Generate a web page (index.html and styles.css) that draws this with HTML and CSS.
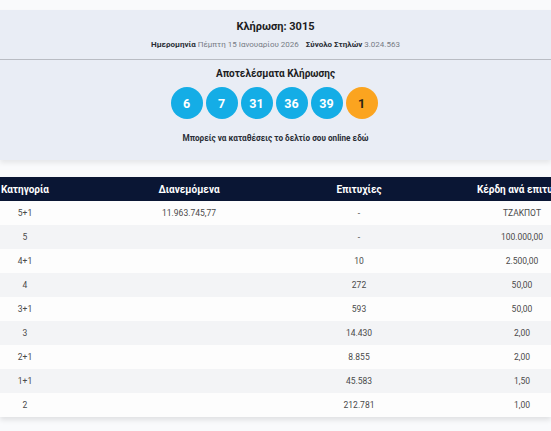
FILE: index.html
```html
<!DOCTYPE html>
<html lang="el">
<head>
<meta charset="utf-8">
<link rel="stylesheet" href="styles.css">
</head>
<body>
<div class="page">
  <section class="draw">
    <div class="draw-top">
      <h1 class="draw-title">Κλήρωση: 3015</h1>
      <p class="draw-meta"><b>Ημερομηνία</b> Πέμπτη 15 Ιανουαρίου 2026 <span class="sp"></span><b>Σύνολο Στηλών</b> 3.024.563</p>
    </div>
    <div class="draw-results">
      <h2 class="results-title">Αποτελέσματα Κλήρωσης</h2>
      <div class="balls">
        <span class="ball">6</span>
        <span class="ball">7</span>
        <span class="ball">31</span>
        <span class="ball">36</span>
        <span class="ball">39</span>
        <span class="ball joker">1</span>
      </div>
      <p class="online">Μπορείς να καταθέσεις το δελτίο σου online εδώ</p>
    </div>
  </section>

  <section class="table-wrap">
    <div class="table">
      <div class="row head">
        <span>Κατηγορία</span><span>Διανεμόμενα</span><span>Επιτυχίες</span><span>Κέρδη ανά επιτυχία</span>
      </div>
      <div class="row"><span>5+1</span><span>11.963.745,77</span><span>-</span><span>ΤΖΑΚΠΟΤ</span></div>
      <div class="row"><span>5</span><span></span><span>-</span><span>100.000,00</span></div>
      <div class="row"><span>4+1</span><span></span><span>10</span><span>2.500,00</span></div>
      <div class="row"><span>4</span><span></span><span>272</span><span>50,00</span></div>
      <div class="row"><span>3+1</span><span></span><span>593</span><span>50,00</span></div>
      <div class="row"><span>3</span><span></span><span>14.430</span><span>2,00</span></div>
      <div class="row"><span>2+1</span><span></span><span>8.855</span><span>2,00</span></div>
      <div class="row"><span>1+1</span><span></span><span>45.583</span><span>1,50</span></div>
      <div class="row"><span>2</span><span></span><span>212.781</span><span>1,00</span></div>
    </div>
  </section>
</div>
</body>
</html>
```

FILE: styles.css
```css
html, body {
  margin: 0;
  padding: 0;
  background: #ffffff;
  overflow: hidden;
}
body {
  font-family: Roboto, "Noto Sans", "Liberation Sans", sans-serif;
  color: #222;
}
.page {
  width: 551px;
  height: 431px;
  overflow: hidden;
  background: #f9fafc;
  padding-top: 10px;
  box-sizing: border-box;
}
.draw {
  background: #e9edf5;
  box-shadow: 0 3px 5px rgba(0,0,0,0.08);
}
.draw-top {
  text-align: center;
  padding: 10px 0 8px;
  border-bottom: 1.5px solid #b9bcc3;
}
.draw-title {
  margin: 0;
  font-size: 11px;
  font-weight: 700;
  line-height: 14px;
  color: #1c1c22;
}
.draw-meta {
  margin: 5px 0 0;
  font-size: 8px;
  line-height: 12px;
  color: #777c85;
}
.draw-meta b {
  color: #2a2d36;
  font-weight: 700;
}
.draw-meta .sp {
  display: inline-block;
  width: 5px;
}
.draw-results {
  text-align: center;
  padding: 7px 0 16px;
}
.results-title {
  margin: 0;
  font-size: 10px;
  font-weight: 700;
  line-height: 13px;
  color: #1c1c22;
}
.balls {
  display: flex;
  justify-content: center;
  gap: 3px;
  margin-top: 7px;
  padding-right: 3px;
}
.ball {
  width: 32px;
  height: 32px;
  border-radius: 50%;
  background: #14ade6;
  color: #fff;
  font-weight: 700;
  font-size: 12.5px;
  display: flex;
  align-items: center;
  justify-content: center;
}
.ball.joker {
  background: #fba41f;
  color: #2a2113;
}
.online {
  margin: 13px 0 0;
  font-size: 8.2px;
  font-weight: 700;
  line-height: 12px;
  color: #2a2d36;
}
.table-wrap {
  margin-top: 17px;
  width: 551px;
  overflow: hidden;
  box-shadow: 0 3px 5px rgba(0,0,0,0.1);
}
.table {
  width: 654px;
}
.row {
  display: grid;
  grid-template-columns: 50px 278px 62px 264px;
  height: 24px;
  align-items: center;
  text-align: center;
  font-size: 8.5px;
  color: #4a4a4a;
  background: #fdfdfd;
}
.row:nth-child(odd) {
  background: #f3f4f6;
}
.row.head {
  background: #0a1634;
  color: #ffffff;
  font-size: 10px;
  font-weight: 700;
  height: 24px;
}
.row span {
  white-space: nowrap;
}
```
